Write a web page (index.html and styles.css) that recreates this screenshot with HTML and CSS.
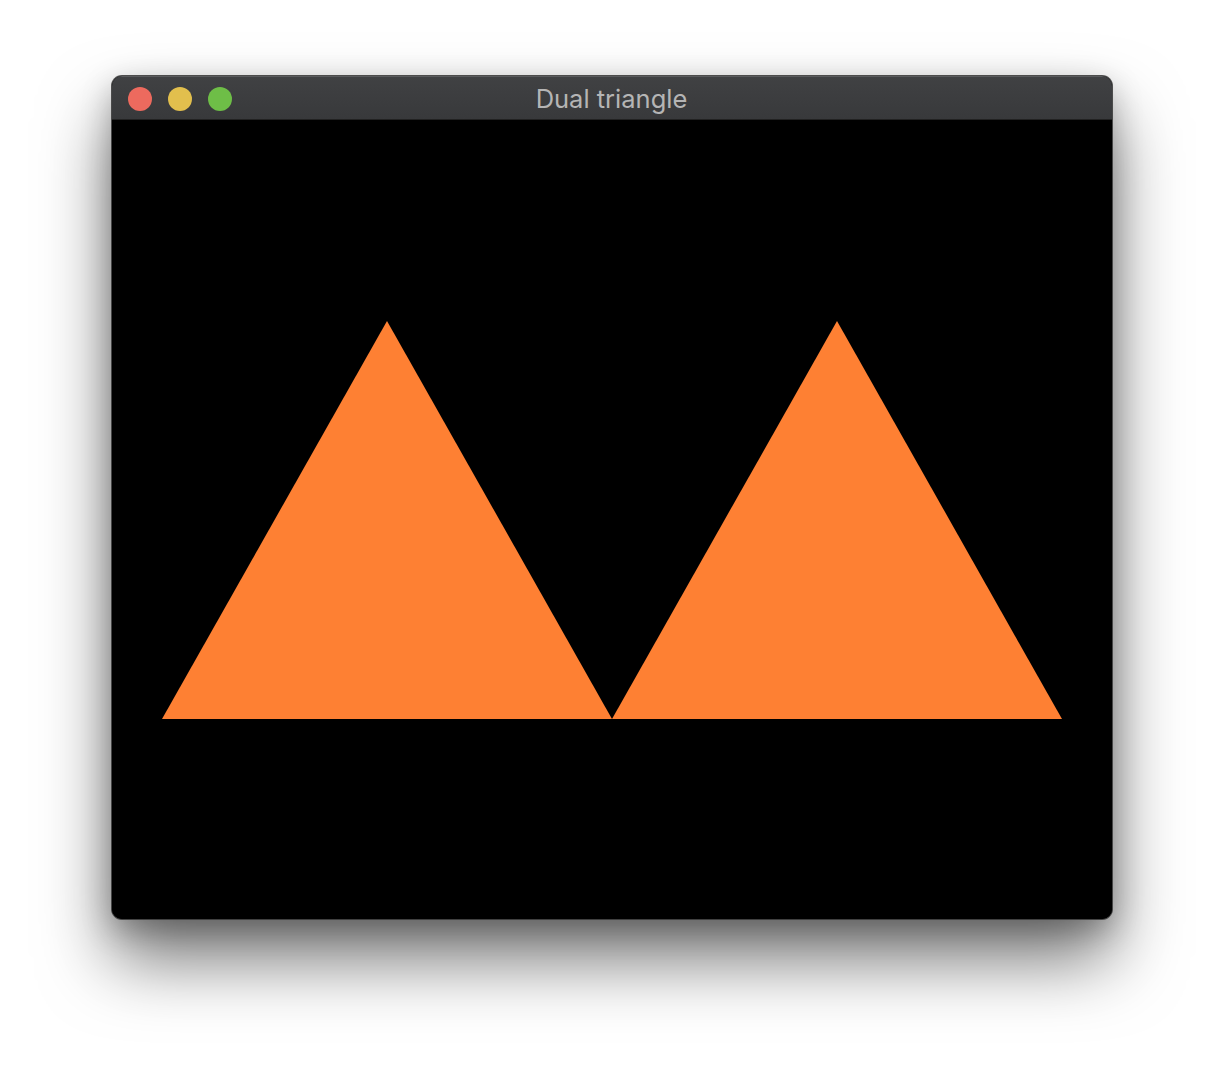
FILE: index.html
```html
<!DOCTYPE html>
<html>
<head>
<meta charset="utf-8">
<link rel="stylesheet" href="styles.css">
</head>
<body>
<div class="stage">
  <div class="window">
    <div class="titlebar">
      <div class="lights">
        <span class="light red"></span>
        <span class="light yellow"></span>
        <span class="light green"></span>
      </div>
      <div class="title">Dual triangle</div>
    </div>
    <div class="content">
      <svg class="canvas" viewBox="0 0 1000 800" width="1000" height="800">
        <polygon points="50,599 275,201 500,599" fill="#fe8033"/>
        <polygon points="500,599 725,201 950,599" fill="#fe8033"/>
      </svg>
    </div>
  </div>
</div>
</body>
</html>
```
FILE: styles.css
```css
html, body {
  margin: 0;
  padding: 0;
  background: #ffffff;
  width: 1224px;
  height: 1068px;
  overflow: hidden;
}
.stage {
  padding: 76px 0 0 112px;
}
.window {
  width: 1000px;
  height: 843px;
  border-radius: 10px;
  overflow: hidden;
  background: #000;
  box-shadow: 0 0 0 1px rgba(60,60,60,0.9), 0 40px 70px rgba(0,0,0,0.55), 0 10px 30px rgba(0,0,0,0.25);
  display: flex;
  flex-direction: column;
}
.titlebar {
  position: relative;
  height: 43px;
  flex: none;
  background: linear-gradient(#404143, #38393b);
  border-top: 1px solid #5a5b5d;
  box-sizing: border-box;
  display: flex;
  align-items: center;
  justify-content: center;
}
.lights {
  position: absolute;
  left: 16px;
  top: 10px;
  display: flex;
  gap: 16px;
}
.light {
  width: 24px;
  height: 24px;
  border-radius: 50%;
  display: block;
}
.red { background: #ed6a5e; }
.yellow { background: #e2bf4d; }
.green { background: #6ebe47; }
.title {
  font-family: Inter, "Liberation Sans", sans-serif;
  font-size: 25.5px;
  color: #b5b5b5;
  margin-top: 1px;
  margin-left: -1px;
}
.content {
  flex: 1;
  background: #000;
  border-top: 1px solid #222;
}
.canvas {
  display: block;
}
```
